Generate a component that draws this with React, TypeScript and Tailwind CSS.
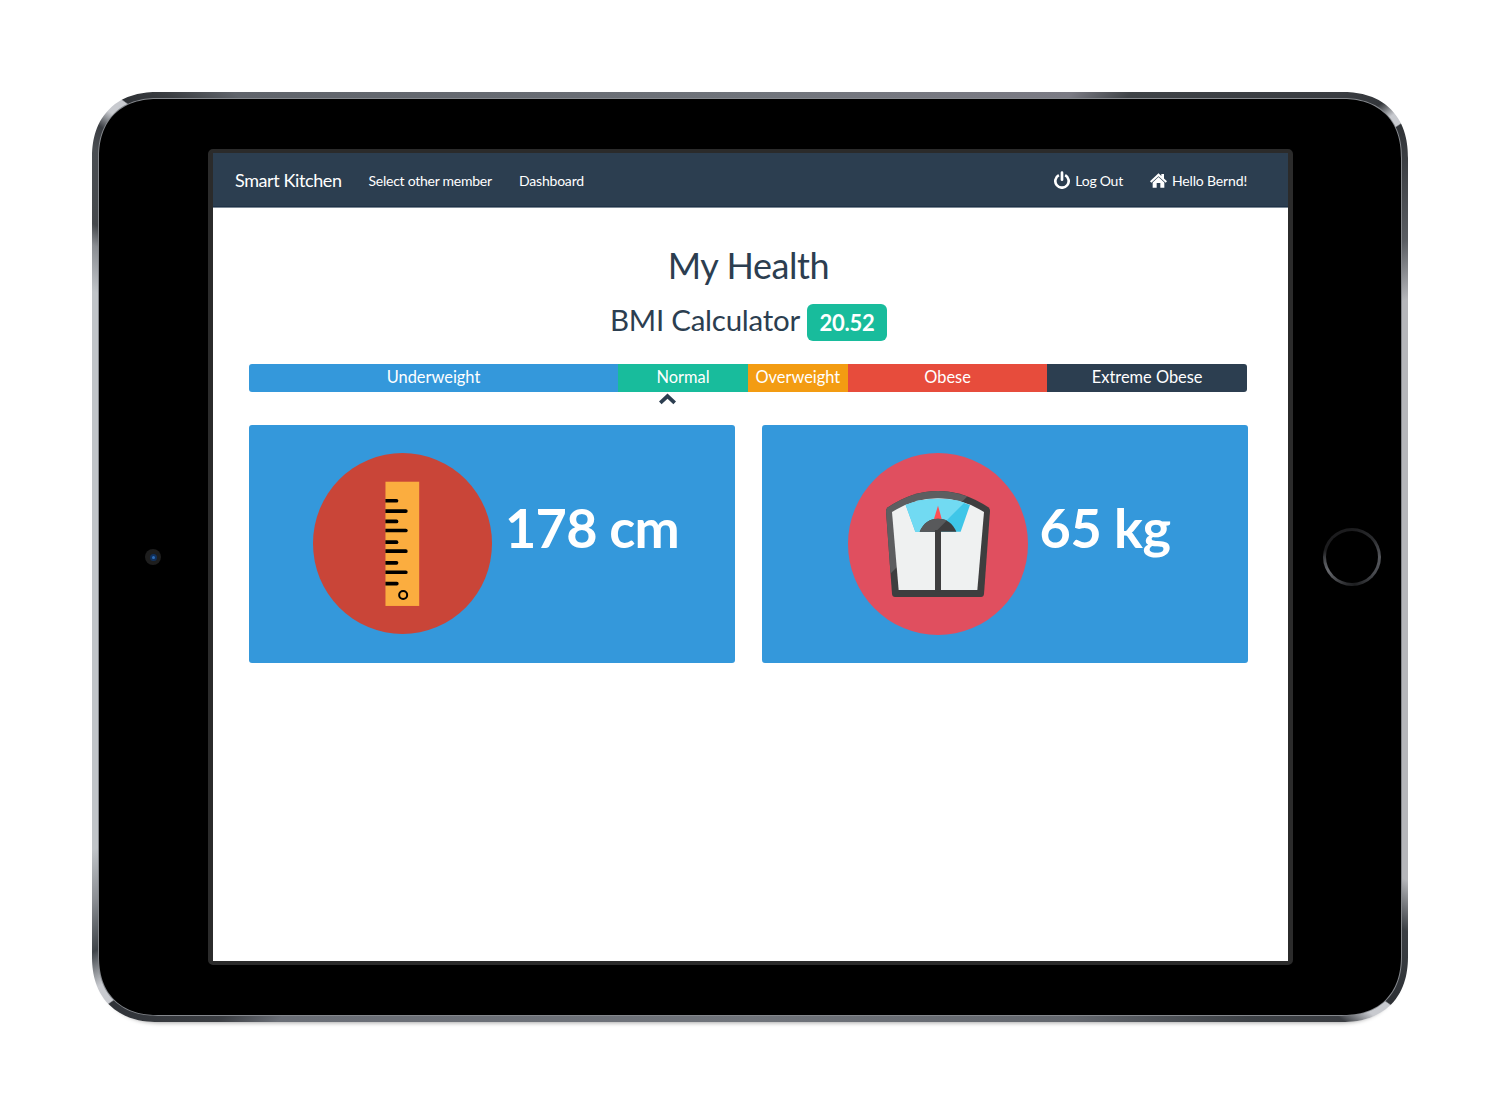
import type { ReactNode } from "react";

const categories = [
  { label: "Underweight", style: "w-[369px] bg-[#3498db]" },
  { label: "Normal", style: "w-[130px] bg-[#18bc9c]" },
  { label: "Overweight", style: "w-[99.7px] bg-[#f39c12]" },
  { label: "Obese", style: "w-[199.7px] bg-[#e74c3c]" },
  { label: "Extreme Obese", style: "w-[199.6px] bg-[#2c3e50]" },
];

const rulerTicks = [
  [183, 290],
  [214, 318],
  [245, 290],
  [272, 318],
  [307, 290],
  [334, 318],
  [369, 290],
  [397, 318],
  [431, 291],
];

function PowerIcon() {
  return (
    <svg viewBox="0 0 48 54" className="h-[18px] w-[16px]" fill="none" stroke="#fff">
      <path d="M14.5 12.5A20 20 0 1 0 33.5 12.5" strokeWidth="8" />
      <path d="M24 5V26" strokeWidth="8" strokeLinecap="round" />
    </svg>
  );
}

function HomeIcon() {
  return (
    <svg viewBox="0 0 51 45" className="h-[15px] w-[17px]" fill="#fff">
      <path d="M25.500 1L34 9V3H42V16.500L51 25L47 29L25.500 9.500L4 29L0 25Z" />
      <path d="M25.500 12L43 28.500V44H31V30H20V44H8V28.500Z" />
    </svg>
  );
}

function RulerIcon() {
  return (
    <svg viewBox="39 40 536 542" preserveAspectRatio="none" className="h-[181px] w-[179px] shrink-0">
      <ellipse cx="307" cy="311" rx="268" ry="271" fill="#c94538" />
      <rect x="256" y="126" width="101" height="372" fill="#fbad3f" />
      {rulerTicks.map(([y, end]) => (
        <path key={y} d={`M256 ${y - 5.5}H${end - 1}a5.500 5.500 0 0 1 0 11H256Z`} fill="#000" />
      ))}
      <circle cx="309" cy="465" r="12" fill="none" stroke="#000" strokeWidth="6" />
    </svg>
  );
}

function ScaleIcon() {
  return (
    <svg viewBox="53 39 540 546" preserveAspectRatio="none" className="h-[182px] w-[180px] shrink-0">
      <defs>
        <clipPath id="shine">
          <path d="M150 140H440L150 431Z" />
        </clipPath>
        <path
          id="body"
          d="M167 213Q167 207 173 202Q245 153 323 153Q401 153 474 202Q479 206 479 213L461 462Q460 471 452 471H194Q186 471 185 462Z"
        />
      </defs>
      <ellipse cx="323" cy="312" rx="270" ry="273" fill="#e04f5f" />
      <use href="#body" fill="#3e3e3f" />
      <use href="#body" fill="#5d5e60" clipPath="url(#shine)" />
      <path d="M185 216Q250 175 323 175Q396 175 461 216L441 450H205Z" fill="#eff1f1" />
      <path d="M226 195Q274 176 323 176Q372 176 419 195L391 275H255Z" fill="#3ec6e8" />
      <path d="M226 195Q274 176 323 176Q367 176 402 188L315 275H255Z" fill="#71daf2" />
      <path d="M310 240L323 197L335 240Z" fill="#ff4f55" />
      <path d="M268 275Q285 236 323 236Q361 236 378 275Z" fill="#3e3e3f" />
      <path d="M268 275Q285 236 323 236Q340 236 350 241L316 275Z" fill="#58595b" />
      <rect x="314" y="270" width="18" height="185" fill="#3e3e3f" />
    </svg>
  );
}

function Card({ icon, value, spacing }: { icon: ReactNode; value: string; spacing: string }) {
  return (
    <section className={`flex h-[238px] w-[486px] items-start rounded-[3px] bg-[#3498db] ${spacing}`}>
      {icon}
      <p className="text-[54px] leading-[64px] font-bold text-white">{value}</p>
    </section>
  );
}

function Screen() {
  return (
    <main className="ml-[47px] h-[816px] w-[1085px] shrink-0 overflow-hidden rounded-[5px] border-t-[4px] border-r-[5px] border-b-[4px] border-l-[5px] border-[#2b2b2b] bg-white text-[#2c3e50]">
      <nav className="flex h-[54px] items-center border-b border-[#1f3247] bg-[#2c3e50] pt-px pr-[41px] pl-[22px] text-[14px] tracking-[-0.25px] text-white shadow-[0_1px_0_#7d8995]">
        <span className="w-[133.5px] text-[18px] tracking-[-0.4px]">Smart Kitchen</span>
        <span className="w-[150.5px]">Select other member</span>
        <span className="tracking-[-0.2px]">Dashboard</span>
        <span className="ml-auto flex items-center gap-[5px]">
          <PowerIcon />
          Log Out
        </span>
        <span className="ml-[27px] flex items-center gap-[5px] tracking-[-0.15px]">
          <HomeIcon />
          Hello Bernd!
        </span>
      </nav>

      <div className="ml-[36px] flex w-[999px] flex-col">
        <h1 className="mt-[36px] text-center text-[36px] leading-[44px] tracking-[-0.4px]">My Health</h1>
        <div className="mt-[15px] flex h-[40px] items-start justify-center gap-[7px]">
          <h2 className="text-[29.5px] leading-[35px] tracking-[-0.25px]">BMI Calculator</h2>
          <span className="mt-[2px] flex h-[37px] w-[80px] items-center justify-center rounded-[6px] bg-[#18bc9c] text-[22px] font-bold tracking-[-0.2px] text-white">
            20.52
          </span>
        </div>
        <div className="mt-[22px] flex h-[27.5px] w-[998px] overflow-hidden rounded-[3px] text-center text-[16.4px] leading-[26px] text-white">
          {categories.map((c) => (
            <div key={c.label} className={c.style}>
              {c.label}
            </div>
          ))}
        </div>
        <svg viewBox="0 0 17 12" className="mt-[1px] ml-[410px] h-[12px] w-[17px]">
          <path d="M1.300 9.800L8.500 3L15.700 9.800" fill="none" stroke="#2c3e50" strokeWidth="3.800" />
        </svg>
        <div className="mt-[20.5px] flex justify-between">
          <Card icon={<RulerIcon />} value="178 cm" spacing="gap-[13px] pt-[28px] pl-[64px] [&>p]:mt-[43px] [&>p]:tracking-[-0.7px]" />
          <Card icon={<ScaleIcon />} value="65 kg" spacing="gap-[11.5px] pt-[28px] pl-[86px] [&>p]:mt-[43px] [&>p]:tracking-[-0.4px]" />
        </div>
      </div>
    </main>
  );
}

export default function App() {
  return (
    <div className="h-[1114px] w-[1500px] overflow-hidden bg-white pt-[92px] pl-[92px] font-['Lato',sans-serif]">
      <div className="h-[930px] w-[1316px] rounded-[66px] p-[6px] shadow-[0_6px_4px_-5px_rgba(0,0,0,0.35)] [corner-shape:superellipse(1.2)] bg-[conic-gradient(#70747b_0deg,#7b7b84_34.7deg,#3f4347_39.4deg,#3a3d42_51.9deg,#33363a_54.3deg,#c8cacf_55.5deg,#c8cacf_56.3deg,#2f3236_56.4deg,#5a5d62_64.2deg,#b5b6ba_68.6deg,#b5b6ba_116.2deg,#3b3f44_119.7deg,#2d3034_124.9deg,#c8cacf_125deg,#c8cacf_126.3deg,#3a3d42_128deg,#3d4146_132.7deg,#63676e_145deg,#70747b_180deg,#6a6e76_225.5deg,#3b3e43_228.9deg,#303338_235.1deg,#c8cacf_235.2deg,#c8cacf_236.6deg,#3f4449_239deg,#8b8e93_242.4deg,#c0c4c8_246deg,#c0c4c8_292deg,#8a8d92_295.4deg,#45484c_296.9deg,#4a4e52_301.9deg,#3a3d42_303.5deg,#c8cacf_304.8deg,#c8cacf_306deg,#2d3034_306.1deg,#3b3e42_308.5deg,#60646b_312deg,#70747b_360deg)]">
        <div className="h-full w-full rounded-[60px] bg-[#85888d] p-px [corner-shape:superellipse(1.2)]">
          <div className="flex h-full w-full items-center rounded-[59px] bg-black pl-[46px] [corner-shape:superellipse(1.2)]">
            <div className="flex size-[16px] shrink-0 items-center justify-center rounded-full bg-[#1e1e1e]">
              <div className="flex size-[7px] items-center justify-center rounded-full bg-[#10305c]">
                <div className="size-[3px] rounded-full bg-[#2f6db8]" />
              </div>
            </div>
            <Screen />
            <div className="ml-[30px] size-[58px] shrink-0 rounded-full bg-[conic-gradient(#1c1c1e_0deg,#2a2b2e_50deg,#55575c_90deg,#4a4c51_125deg,#1d1e20_175deg,#2e2f32_195deg,#66686d_240deg,#4a4c50_262deg,#1c1c1e_285deg,#1c1c1e_360deg)] p-[3px]">
              <div className="size-full rounded-full bg-black" />
            </div>
          </div>
        </div>
      </div>
    </div>
  );
}
